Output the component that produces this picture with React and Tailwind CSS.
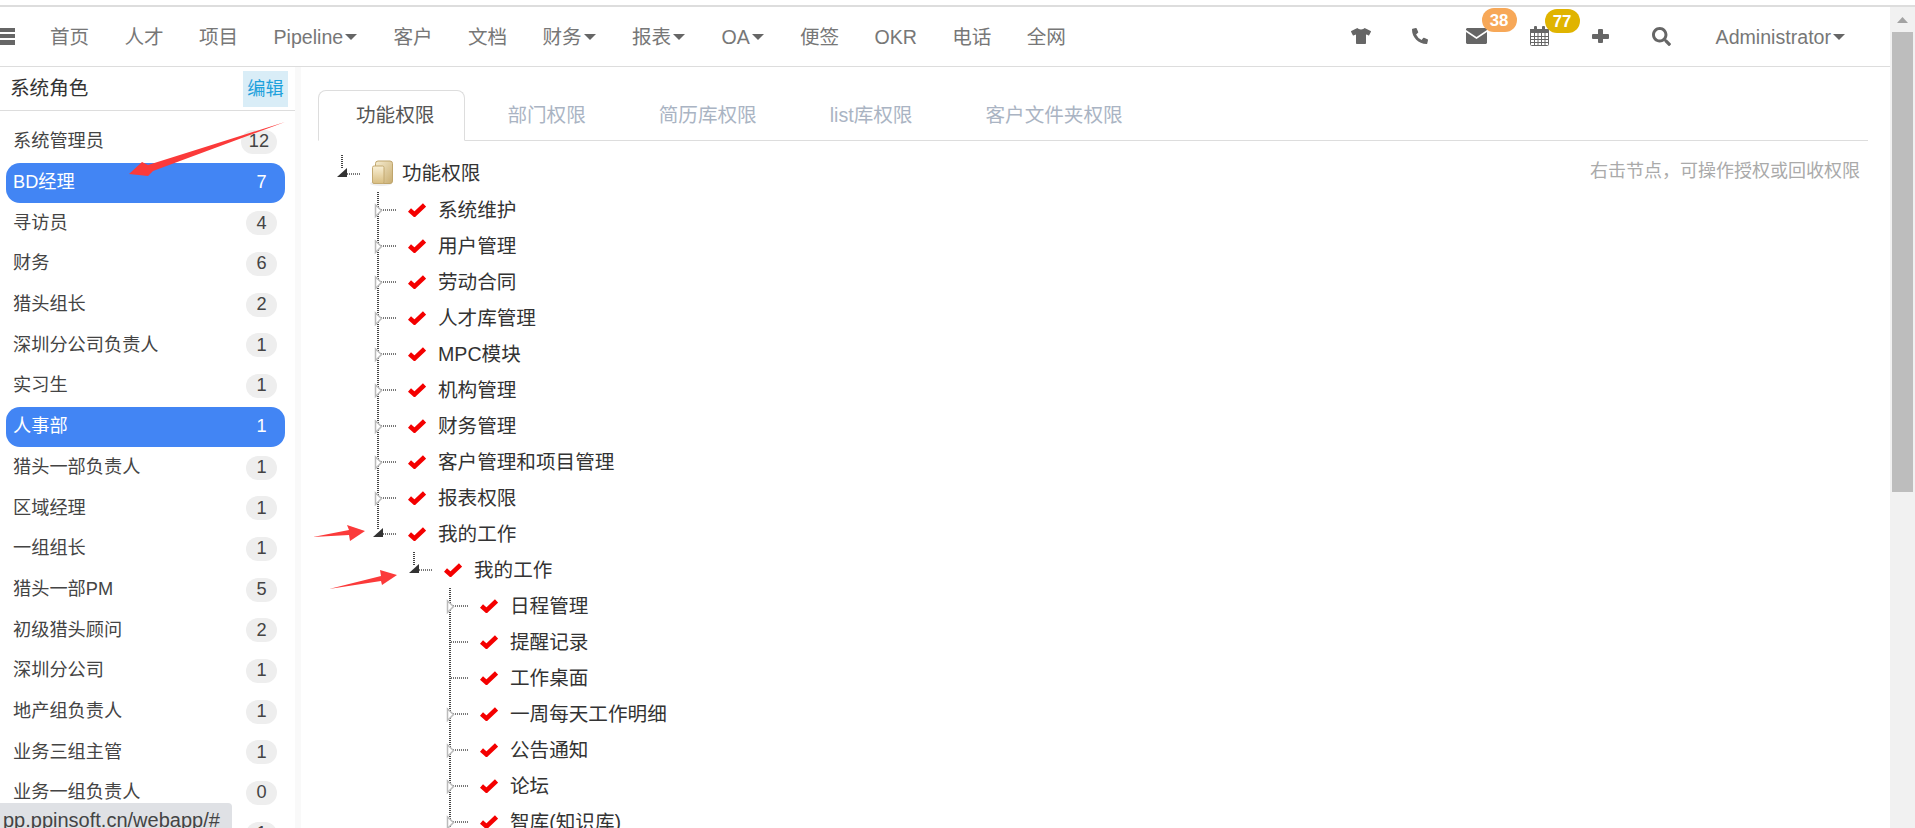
import { FaPhoneAlt, FaSearch, FaTshirt } from "react-icons/fa";

const font = { fontFamily: '"Liberation Sans", "Noto Sans CJK SC", sans-serif' };

const navItems = [
  ["首页"], ["人才"], ["项目"], ["Pipeline", true], ["客户"], ["文档"], ["财务", true], ["报表", true], ["OA", true], ["便签"], ["OKR"], ["电话"], ["全网"],
];

// last row is hidden behind the link preview, only its badge shows
const roles = [
  ["系统管理员", 12], ["BD经理", 7, true], ["寻访员", 4], ["财务", 6], ["猎头组长", 2], ["深圳分公司负责人", 1], ["实习生", 1], ["人事部", 1, true],
  ["猎头一部负责人", 1], ["区域经理", 1], ["一组组长", 1], ["猎头一部PM", 5], ["初级猎头顾问", 2], ["深圳分公司", 1], ["地产组负责人", 1],
  ["业务三组主管", 1], ["业务一组负责人", 0], ["", 1],
];

const tabs = ["功能权限", "部门权限", "简历库权限", "list库权限", "客户文件夹权限"];

const tree = [
  [1, "系统维护", "closed"], [1, "用户管理", "closed"], [1, "劳动合同", "closed"], [1, "人才库管理", "closed"], [1, "MPC模块", "closed"],
  [1, "机构管理", "closed"], [1, "财务管理", "closed"], [1, "客户管理和项目管理", "closed"], [1, "报表权限", "closed"], [1, "我的工作", "open"],
  [2, "我的工作", "open"], [3, "日程管理", "closed"], [3, "提醒记录", "leaf"], [3, "工作桌面", "leaf"], [3, "一周每天工作明细", "closed"],
  [3, "公告通知", "closed"], [3, "论坛", "closed"], [3, "智库(知识库)", "closed"],
];

const indent = { 0: "pl-0", 1: "pl-[36px]", 2: "pl-[72px]", 3: "pl-[108px]" };

function Caret() {
  return (
    <svg width="12" height="6" className="mr-[1px] ml-[2px] shrink-0">
      <polygon points="0,0 12,0 6,6" fill="#666" />
    </svg>
  );
}

function MenuIcon() {
  return (
    <svg width="15" height="17" className="shrink-0">
      <rect y="0" width="15" height="4" fill="#666" />
      <rect y="6" width="15" height="4" fill="#666" />
      <rect y="12" width="15" height="5" fill="#666" />
    </svg>
  );
}

function MailIcon() {
  return (
    <svg width="21" height="16" className="block">
      <path d="M1 0h19l1 1v1l-10.5 7L0 2V1z" fill="#666" />
      <path d="M0 4l10.5 7L21 4v11l-1 1H1l-1-1z" fill="#666" />
    </svg>
  );
}

function CalendarIcon() {
  return (
    <svg width="19" height="20" className="block">
      <rect x="0.5" y="3.5" width="18" height="16" rx="1" fill="#fff" stroke="#666" />
      <rect x="0" y="3" width="19" height="4" fill="#666" />
      <rect x="4" y="0" width="3" height="5" rx="1" fill="#666" />
      <rect x="12" y="0" width="3" height="5" rx="1" fill="#666" />
      <path d="M1 10.5h17M1 13.5h17M1 16.5h17M4.5 7v12M8 7v12M11.5 7v12M15 7v12" stroke="#666" />
    </svg>
  );
}

function PlusIcon() {
  return (
    <svg width="17" height="14" className="shrink-0">
      <rect x="0" y="5" width="17" height="5" rx="1" fill="#666" />
      <rect x="6" y="0" width="5" height="14" rx="1" fill="#666" />
    </svg>
  );
}

function CheckIcon() {
  return (
    <svg width="18" height="14" className="ml-[4px]">
      <polyline points="1.5,7 6.5,11.5 16.5,2" fill="none" stroke="#f40000" strokeWidth="4.5" />
    </svg>
  );
}

function Connector({ type, root }) {
  return (
    <svg width="36" height="36" className="shrink-0">
      {type === "open" ? (
        <>
          <line x1="10" y1="0" x2="10" y2="14" stroke="#444" strokeWidth="2" strokeDasharray="1 1" />
          <line x1="15" y1={root ? 19 : 18} x2="29" y2={root ? 19 : 18} stroke="#777" strokeWidth="2" strokeDasharray="1 1" />
          <polygon points={root ? "5,22 15,22 15,13" : "5,21 15,21 15,12"} fill="#333" />
        </>
      ) : (
        <>
          <line x1="10" y1="0" x2="10" y2="36" stroke="#444" strokeWidth="2" strokeDasharray="1 1" />
          <line x1="11" y1="18" x2="29" y2="18" stroke="#777" strokeWidth="2" strokeDasharray="1 1" />
          {type === "closed" && <polygon points="7.5,13 7.5,24.5 13.5,18.5" fill="#fff" stroke="#bbb" strokeWidth="1.5" />}
        </>
      )}
    </svg>
  );
}

function FolderIcon() {
  return (
    <svg width="24" height="26" viewBox="0 0 24 26" className="ml-[2px]">
      <defs>
        <linearGradient id="folderBack" x1="0" y1="0" x2="1" y2="1">
          <stop offset="0" stopColor="#f6edd2" />
          <stop offset="1" stopColor="#c9ad70" />
        </linearGradient>
        <linearGradient id="folderFront" x1="0" y1="0" x2="0" y2="1">
          <stop offset="0" stopColor="#f9f0d6" />
          <stop offset="1" stopColor="#d8bd80" />
        </linearGradient>
      </defs>
      <ellipse cx="11" cy="23.5" rx="11" ry="2.5" fill="#eeeeee" />
      <rect x="5.5" y="1" width="17" height="22.5" rx="2.5" fill="url(#folderBack)" stroke="#bfa56c" />
      <rect x="2.5" y="6" width="11.5" height="17.5" rx="1.5" fill="url(#folderFront)" stroke="#c4aa72" />
    </svg>
  );
}

function TreeRow({ level, label, type }) {
  return (
    <div className={`flex h-[36px] items-center ${indent[level]}`}>
      <Connector type={type} root={level === 0} />
      <div className="flex w-[34px] shrink-0 items-center">
        {level === 0 ? <FolderIcon /> : <CheckIcon />}
      </div>
      <span className="whitespace-nowrap pt-[2px] text-[19.6px] text-[#333]">{label}</span>
    </div>
  );
}

export default function App() {
  return (
    <div className="relative flex h-[828px] w-[1915px] flex-col overflow-hidden bg-white" style={font}>
      <div className="h-[7px] shrink-0 border-b-2 border-[#dddddd]" />
      <div className="flex min-h-0 flex-1">
        <div className="flex w-[1890px] flex-col">
          <header className="flex h-[60px] shrink-0 items-center border-b border-[#dddddd] text-[19.6px] text-[#777]">
            <MenuIcon />
            <nav className="mt-[2px] ml-[35px] flex items-center gap-[35.3px]">
              {navItems.map(([name, caret]) => (
                <span key={name} className="flex items-center whitespace-nowrap">
                  {name}
                  {caret && <Caret />}
                </span>
              ))}
            </nav>
            <div className="ml-auto flex items-center text-[#666]">
              <FaTshirt className="text-[20px]" />
              <FaPhoneAlt className="ml-[41px] text-[16px]" />
              <div className="relative ml-[38px]">
                <MailIcon />
                <span className="absolute -top-[20px] left-[16px] flex h-[24px] w-[35px] items-center justify-center rounded-[12px] bg-[#f7a858] text-[16.8px] font-bold text-white">38</span>
              </div>
              <div className="relative ml-[43px]">
                <CalendarIcon />
                <span className="absolute -top-[17px] left-[15px] flex h-[24px] w-[35px] items-center justify-center rounded-[12px] bg-[#e0b400] text-[16.8px] font-bold text-white">77</span>
              </div>
              <div className="ml-[43px]"><PlusIcon /></div>
              <FaSearch className="ml-[43px] text-[19px]" />
              <span className="mt-[2px] ml-[45px] text-[#777]">Administrator</span>
              <div className="mt-[2px] mr-[44px]"><Caret /></div>
            </div>
          </header>

          <div className="flex min-h-0 flex-1">
            <aside className="w-[301px] shrink-0 border-r-[6px] border-[#f9f9f9]">
              <div className="flex h-[44px] items-center justify-between border-b border-[#dddddd] pr-[7px] pl-[10px]">
                <span className="text-[19.6px] text-[#333]">系统角色</span>
                <span className="flex h-[36px] w-[45px] items-center justify-center bg-[#d9edf7] pt-[2px] text-[18.2px] text-[#1ea1dc]">编辑</span>
              </div>
              <div className="pt-[11px]">
                {roles.map(([name, count, active]) => (
                  <div
                    key={name}
                    className={`mx-[6px] mb-[0.7px] flex h-[40px] w-[279px] items-center justify-between rounded-[14px] pr-[8px] pl-[7px] text-[18.2px] ${active ? "bg-[#4285f4] text-white" : "text-[#444]"}`}
                  >
                    <span className="whitespace-nowrap">{name}</span>
                    <span className={`flex h-[24px] min-w-[31px] items-center justify-center rounded-[12px] px-[8px] ${active ? "" : "bg-[#eeeeee]"}`}>{count}</span>
                  </div>
                ))}
              </div>
            </aside>

            <main className="min-w-0 flex-1 pt-[23px] pr-[22px] pl-[17px]">
              <div className="flex h-[51px] items-end border-b border-[#dddddd]">
                {tabs.map((tab, i) => (
                  <div
                    key={tab}
                    className={`-mb-px mr-[3px] flex h-[51px] items-center pt-[1px] text-[19.6px] whitespace-nowrap ${i === 0 ? "rounded-t-[8px] border border-b-white border-[#dddddd] pr-[30px] pl-[37px] text-[#555]" : "pr-[31px] pl-[39px] text-[#aab4c3]"}`}
                  >
                    {tab}
                  </div>
                ))}
              </div>
              <div className="flex justify-between pt-[14px] pr-[8px] pl-[14px]">
                <div>
                  <TreeRow level={0} label="功能权限" type="open" />
                  <div className="pt-[1px]">
                    {tree.map(([level, label, type], i) => (
                      <TreeRow key={i} level={level} label={label} type={type} />
                    ))}
                  </div>
                </div>
                <span className="pt-[3px] text-[18px] text-[#aaaaaa]">右击节点，可操作授权或回收权限</span>
              </div>
            </main>
          </div>
        </div>

        <div className="flex w-[25px] shrink-0 flex-col items-center bg-[#f1f1f1]">
          <div className="flex h-[25px] items-center justify-center">
            <svg width="11" height="6"><polygon points="0,6 11,6 5.5,0" fill="#a3a3a3" /></svg>
          </div>
          <div className="h-[460px] w-[21px] bg-[#bdbdbd]" />
        </div>
      </div>

      {/* red markup arrows drawn over the screenshot */}
      <svg width="1915" height="828" className="pointer-events-none absolute top-0 left-0">
        <polygon points="285,122 148,165 142,162 129,174 148,176 153,171" fill="#fb3a3a" />
        <polygon points="313,537 349,530 347,525 365,531 350,541 349,535" fill="#fb3a3a" />
        <polygon points="329,589 381,576 380,570 397,575 382,585 381,581" fill="#fb3a3a" />
      </svg>

      <div className="absolute bottom-0 left-0 h-[25px] w-[232px] overflow-hidden rounded-tr-[4px] bg-[#dfe1e5] pt-[5px] pl-[3px] text-[20px] leading-[25px] whitespace-nowrap text-[#444]">
        pp.ppinsoft.cn/webapp/#
      </div>
    </div>
  );
}
